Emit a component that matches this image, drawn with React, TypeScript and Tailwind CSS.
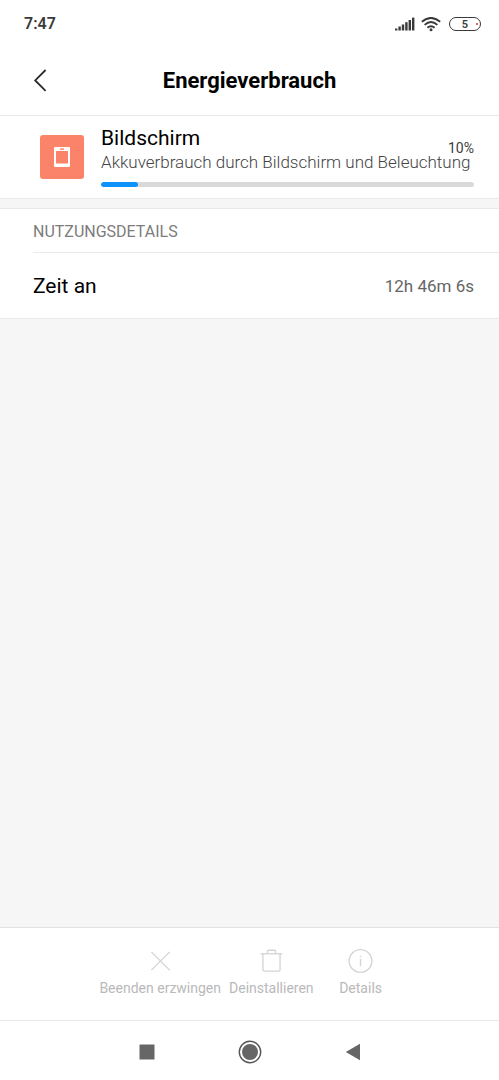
import { ReactNode } from 'react';

const actions: { label: string; icon: ReactNode }[] = [
  {
    label: 'Beenden erzwingen',
    icon: <path d="M4 4l19 19M23 4L4 23" />,
  },
  {
    label: 'Deinstallieren',
    icon: (
      <>
        <path d="M2.2 6h22.6" />
        <path d="M9.3 5.8V3.3q0-1 1-1h6.4q1 0 1 1v2.5" />
        <path d="M4.6 6v16.5q0 1.5 1.5 1.5h14.8q1.5 0 1.5-1.5V6" />
      </>
    ),
  },
  {
    label: 'Details',
    icon: (
      <>
        <circle cx="13.5" cy="13.5" r="11.8" />
        <path d="M13.5 11.5V19M13.5 8v1.6" />
      </>
    ),
  },
];

function StatusBar() {
  return (
    <div className="h-[46px] flex items-center justify-between pl-6 pr-[18px] pt-0.5 text-[#3a3a3a]">
      <span className="text-base font-semibold">7:47</span>
      <div className="flex items-center gap-1.5">
        <svg width="20" height="15" viewBox="0 0 20 15" fill="#3a3a3a" aria-hidden="true">
          <rect x="0" y="11.5" width="2.4" height="2" />
          <rect x="3.4" y="9.5" width="2.4" height="4" />
          <rect x="6.8" y="7.5" width="2.4" height="6" />
          <rect x="10.2" y="5.2" width="2.4" height="8.3" />
          <rect x="13.6" y="3" width="2.4" height="10.5" />
          <rect x="17" y="0.6" width="2.4" height="12.9" />
        </svg>
        <svg width="20" height="15" viewBox="0 0 20 15" fill="none" stroke="#3a3a3a" strokeWidth="1.9" aria-hidden="true">
          <path d="M0.8 4.8Q10-3 19.2 4.8" />
          <path d="M3.6 7.9Q10 2.3 16.4 7.9" />
          <path d="M6.4 10.8Q10 7.5 13.6 10.8" />
          <circle cx="10" cy="12.7" r="1.5" fill="#3a3a3a" stroke="none" />
        </svg>
        <span className="relative w-8 h-[14px] ml-0.5 rounded-full border border-[#3a3a3a] flex items-center justify-center text-[11px] leading-none font-semibold">
          5
          <span className="absolute right-0.5 size-0.5 rounded-full bg-red-500" />
        </span>
      </div>
    </div>
  );
}

export default function App() {
  const percent = 10;

  return (
    <div className="min-h-screen flex flex-col bg-white font-[Roboto,sans-serif]">
      <StatusBar />

      <header className="h-[70px] grid grid-cols-[1fr_auto_1fr] items-center px-[33px] border-b border-[#eaeaea]">
        <button type="button" aria-label="Zurück" className="w-4 h-6">
          <svg width="16" height="24" viewBox="0 0 16 24" fill="none" stroke="#2b2b2b" strokeWidth="1.8">
            <path d="M12.6 1L2.2 11.4l10.4 10.4" />
          </svg>
        </button>
        <h1 className="text-[22px] leading-7 font-bold text-black">Energieverbrauch</h1>
      </header>

      <main className="flex-1 bg-[#f6f6f6]">
        <section className="flex gap-[17px] pl-10 pr-[25px] pt-2 pb-[11px] bg-white border-b border-[#eaeaea]">
          <div className="size-11 mt-[11px] shrink-0 rounded-[3px] bg-[#fb8369] flex items-center justify-center">
            <svg width="16" height="20" viewBox="0 0 16 20" aria-hidden="true">
              <rect width="16" height="20" rx="1" fill="#fff" />
              <rect x="2" y="4" width="12" height="12.5" fill="#fb8369" />
              <rect x="6" y="1.4" width="4" height="1.4" fill="#fb8369" />
            </svg>
          </div>
          <div className="flex-1 min-w-0">
            <div className="flex justify-between">
              <h2 className="text-[21px] leading-7 text-black">Bildschirm</h2>
              <span className="h-6 pt-4 text-sm leading-4 text-[#3c3c3c]">{percent}%</span>
            </div>
            <p className="-mt-0.5 text-[17px] leading-6 font-light whitespace-nowrap text-[#444]">
              Akkuverbrauch durch Bildschirm und Beleuchtung
            </p>
            <div className="mt-2 h-[5px] rounded-full bg-[#d9d9d9] overflow-hidden">
              <div className="h-full rounded-full bg-[#0d93fb]" style={{ width: `${percent}%` }} />
            </div>
          </div>
        </section>

        <section className="mt-[9px] bg-white border-y border-[#eaeaea]">
          <h3 className="ml-[33px] h-11 pt-0.5 flex items-center border-b border-[#eaeaea] text-base text-[#7c7c7c]">
            NUTZUNGSDETAILS
          </h3>
          <div className="h-[65px] pt-0.5 flex items-center justify-between pl-[33px] pr-[25px]">
            <span className="text-[21px] text-black">Zeit an</span>
            <span className="text-[17px] text-[#666]">12h 46m 6s</span>
          </div>
        </section>
      </main>

      <footer className="h-[93px] flex justify-center gap-2 pt-5 border-t border-[#e2e2e2]">
        {actions.map((action) => (
          <button
            key={action.label}
            type="button"
            disabled
            className="flex flex-col items-center min-w-[78px] h-[50px] text-sm leading-5 text-[#b9b9b9]"
          >
            <svg width="27" height="27" viewBox="0 0 27 27" fill="none" stroke="#d4d4d4" strokeWidth="1.4">
              {action.icon}
            </svg>
            <span className="mt-1">{action.label}</span>
          </button>
        ))}
      </footer>

      <nav className="h-[60px] flex items-center justify-center gap-[83px] border-t border-[#eaeaea] pt-0.5">
        <button type="button" aria-label="Letzte Apps">
          <svg width="16" height="16" viewBox="0 0 16 16">
            <rect x="0.5" y="0.5" width="15" height="15" rx="0.5" fill="#666" />
          </svg>
        </button>
        <button type="button" aria-label="Startseite">
          <svg width="24" height="24" viewBox="0 0 24 24">
            <circle cx="12" cy="12" r="10.7" fill="none" stroke="#555" strokeWidth="1.4" />
            <circle cx="12" cy="12" r="8" fill="#666" />
          </svg>
        </button>
        <button type="button" aria-label="Zurück">
          <svg width="16" height="18" viewBox="0 0 16 18">
            <path d="M0.8 9L15 0.8v16.4z" fill="#666" />
          </svg>
        </button>
      </nav>
    </div>
  );
}
